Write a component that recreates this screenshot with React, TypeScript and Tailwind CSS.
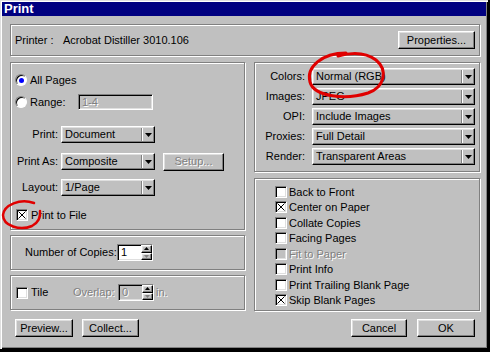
import React from 'react';

const raised =
  'border border-t-white border-l-white border-r-black border-b-black shadow-[inset_-1px_-1px_0_#808080,inset_1px_1px_0_#dfdfdf]';
const sunken =
  'border border-t-[#808080] border-l-[#808080] border-r-white border-b-white shadow-[inset_1px_1px_0_#000,inset_-1px_-1px_0_#dfdfdf]';
const etched = 'border border-[#808080] shadow-[inset_1px_1px_0_#fff,1px_1px_0_#fff]';
const disabled = 'text-[#808080] [text-shadow:1px_1px_0_#fff]';

function Arrow() {
  return (
    <svg width="7" height="4" viewBox="0 0 7 4">
      <path d="M0 0h7L3.5 4z" fill="#000" />
    </svg>
  );
}

function Select({ value, w }: { value: string; w: string }) {
  return (
    <div className={`${raised} ${w} h-[17px] flex items-center bg-[#c0c0c0]`}>
      <span className="flex-1 pl-[3px] leading-none">{value}</span>
      <div className="w-px h-[13px] bg-[#808080] shadow-[1px_0_0_#fff]" />
      <div className="w-[12px] flex justify-center">
        <Arrow />
      </div>
    </div>
  );
}

function Button({ label, w, off }: { label: string; w: string; off?: boolean }) {
  return (
    <div className={`${raised} ${w} h-[18px] flex items-center justify-center ${off ? disabled : ''}`}>
      {label}
    </div>
  );
}

function Check({ checked, off }: { checked?: boolean; off?: boolean }) {
  return (
    <div className={`${sunken} w-[12px] h-[12px] shrink-0 flex items-center justify-center ${off ? 'bg-[#c0c0c0]' : 'bg-white'}`}>
      {checked && (
        <svg width="8" height="8" viewBox="0 0 8 8">
          <path d="M0.5 0.5L7.5 7.5M7.5 0.5L0.5 7.5" stroke="#000" strokeWidth="1" />
        </svg>
      )}
    </div>
  );
}

function Radio({ on }: { on?: boolean }) {
  return (
    <div className="w-[12px] h-[12px] rounded-full bg-white border border-t-[#808080] border-l-[#808080] border-r-white border-b-white shadow-[inset_1px_1px_0_#000] flex items-center justify-center">
      {on && <div className="w-[5px] h-[5px] rounded-full bg-[#0000ff]" />}
    </div>
  );
}

function Spinner({ value, off }: { value: string; off?: boolean }) {
  return (
    <div className={`${sunken} w-[36px] h-[17px] flex ${off ? 'bg-[#c0c0c0]' : 'bg-white'}`}>
      <span className={`flex-1 pl-[3px] leading-[15px] ${off ? disabled : ''}`}>{value}</span>
      <div className="w-[11px] flex flex-col">
        <div className={`${raised} flex-1 flex items-center justify-center bg-[#c0c0c0]`}>
          <svg width="5" height="3" viewBox="0 0 5 3">
            <path d="M0 3h5L2.5 0z" fill="#000" />
          </svg>
        </div>
        <div className={`${raised} flex-1 flex items-center justify-center bg-[#c0c0c0]`}>
          <svg width="5" height="3" viewBox="0 0 5 3">
            <path d="M0 0h5L2.5 3z" fill="#808080" />
          </svg>
        </div>
      </div>
    </div>
  );
}

const options = [
  { label: 'Colors:', value: 'Normal (RGB)' },
  { label: 'Images:', value: 'JPEG' },
  { label: 'OPI:', value: 'Include Images' },
  { label: 'Proxies:', value: 'Full Detail' },
  { label: 'Render:', value: 'Transparent Areas' },
];

const flags = [
  { label: 'Back to Front' },
  { label: 'Center on Paper', checked: true },
  { label: 'Collate Copies' },
  { label: 'Facing Pages' },
  { label: 'Fit to Paper', off: true },
  { label: 'Print Info' },
  { label: 'Print Trailing Blank Page' },
  { label: 'Skip Blank Pages', checked: true },
];

export default function App() {
  return (
    <div className="w-[490px] h-[352px] bg-black relative font-['Liberation_Sans',Arial,sans-serif] text-[11px] text-black">
      <div className="w-[488px] h-[349px] bg-[#c0c0c0] p-[2px] shadow-[inset_1px_1px_0_#dfdfdf,inset_2px_2px_0_#fff,inset_-1px_-1px_0_#000,inset_-2px_-2px_0_#808080]">
        {/* title bar */}
        <div className="h-[14px] bg-[#000080] text-white font-bold text-[13px] leading-[14px] pl-[2px]">Print</div>

        <div className="pl-[8px] pt-[8px]">
          {/* printer */}
          <div className={`${etched} w-[470px] h-[32px] flex items-center pl-[4px] pr-[4px]`}>
            <span className="w-[48px]">Printer :</span>
            <span className="flex-1">Acrobat Distiller 3010.106</span>
            <Button label="Properties..." w="w-[77px]" />
          </div>

          <div className="flex gap-[9px] mt-[6px]">
            {/* left column */}
            <div className="w-[235px] flex flex-col">
              <div className={`${etched} h-[168px] pl-[4px] pt-[10px] flex flex-col`}>
                <div className="h-[14px] flex items-center gap-[3px]">
                  <Radio on />
                  <span>All Pages</span>
                </div>
                <div className="h-[16px] mt-[7px] flex items-center">
                  <Radio />
                  <span className="ml-[3px] w-[48px]">Range:</span>
                  <div className={`${sunken} w-[75px] h-[16px] flex items-center pl-[3px] ${disabled}`}>1-4</div>
                </div>
                <div className="h-[17px] mt-[16px] flex items-center">
                  <span className="w-[43px] text-right">Print:</span>
                  <div className="ml-[3px]">
                    <Select value="Document" w="w-[94px]" />
                  </div>
                </div>
                <div className="h-[17px] mt-[10px] flex items-center">
                  <span className="w-[43px] text-right whitespace-nowrap">Print As:</span>
                  <div className="ml-[3px]">
                    <Select value="Composite" w="w-[94px]" />
                  </div>
                  <div className="ml-[8px]">
                    <Button label="Setup..." w="w-[61px]" off />
                  </div>
                </div>
                <div className="h-[17px] mt-[9px] flex items-center">
                  <span className="w-[43px] text-right">Layout:</span>
                  <div className="ml-[3px]">
                    <Select value="1/Page" w="w-[94px]" />
                  </div>
                </div>
                <div className="h-[14px] mt-[12px] flex items-center gap-[3px] pl-[1px]">
                  <Check checked />
                  <span>Print to File</span>
                </div>
              </div>

              <div className={`${etched} h-[35px] mt-[5px] flex items-center pl-[14px]`}>
                <span className="w-[92px]">Number of Copies:</span>
                <Spinner value="1" />
              </div>

              <div className={`${etched} h-[35px] mt-[5px] flex items-center pl-[5px]`}>
                <Check />
                <span className="ml-[3px] w-[42px]">Tile</span>
                <span className={`w-[45px] ${disabled}`}>Overlap:</span>
                <Spinner value="0" off />
                <span className={`ml-[2px] ${disabled}`}>in.</span>
              </div>

              <div className="flex gap-[9px] mt-[9px] pl-[5px]">
                <Button label="Preview..." w="w-[58px]" />
                <Button label="Collect..." w="w-[57px]" />
              </div>
            </div>

            {/* right column */}
            <div className="w-[226px] flex flex-col">
              <div className={`${etched} h-[110px] pt-[5px] flex flex-col gap-[3px]`}>
                {options.map((o) => (
                  <div key={o.label} className="h-[17px] flex items-center">
                    <span className="w-[50px] text-right">{o.label}</span>
                    <div className="ml-[7px]">
                      <Select value={o.value} w="w-[163px]" />
                    </div>
                  </div>
                ))}
              </div>

              <div className={`${etched} h-[133px] mt-[6px] pt-[5px] pl-[20px]`}>
                {flags.map((f) => (
                  <div key={f.label} className="h-[15.5px] flex items-center gap-[2px]">
                    <Check checked={f.checked} off={f.off} />
                    <span className={f.off ? disabled : ''}>{f.label}</span>
                  </div>
                ))}
              </div>

              <div className="flex justify-end gap-[10px] mt-[8px] pr-[5px]">
                <Button label="Cancel" w="w-[56px]" />
                <Button label="OK" w="w-[58px]" />
              </div>
            </div>
          </div>
        </div>
      </div>

      {/* red annotation rings */}
      <svg className="absolute left-0 top-0 pointer-events-none" width="490" height="352" viewBox="0 0 490 352">
        <path
          d="M346 53 C322 53 306 67 310 82 C314 97 346 100 368 93 C385 87 388 70 376 60 C368 54 356 51 338 56"
          fill="none"
          stroke="#e00000"
          strokeWidth="3"
          strokeLinecap="round"
        />
        <path
          d="M34 203 C20 198 4 205 3 215 C3 226 20 231 32 226 C38 223 41 217 40 211"
          fill="none"
          stroke="#e00000"
          strokeWidth="2.5"
          strokeLinecap="round"
        />
      </svg>
    </div>
  );
}
